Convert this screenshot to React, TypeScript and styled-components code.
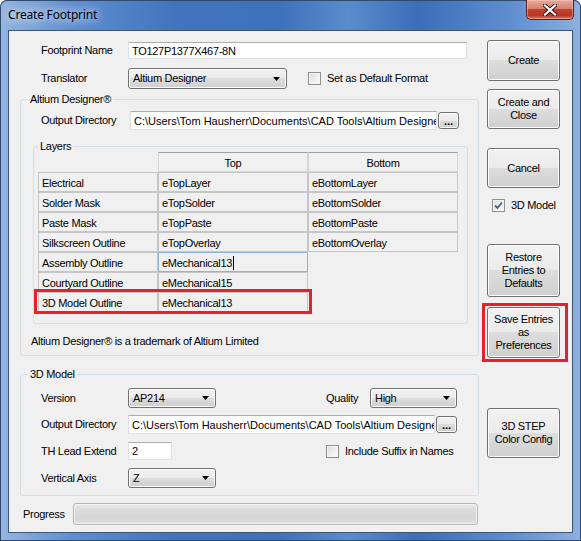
import styled, { createGlobalStyle, css } from "styled-components";

const GlobalStyle = createGlobalStyle`
  html, body { margin: 0; padding: 0; background: #ffffff; }
  body { font-family: "Liberation Sans", Arial, sans-serif; }
  * { box-sizing: border-box; }
`;

const RED = "#e3232c";

const highlight = (l: number, r: number, t: number, b: number) => css`
  position: relative;
  &::after {
    content: "";
    position: absolute;
    left: ${-l}px;
    right: ${-r}px;
    top: ${-t}px;
    bottom: ${-b}px;
    border: 3px solid ${RED};
    pointer-events: none;
  }
`;

const Window = styled.div`
  width: 581px;
  height: 541px;
  display: flex;
  flex-direction: column;
  border-radius: 7px 7px 0 0;
  background: linear-gradient(
    90deg,
    #94b5e0 0%,
    #5f8fd1 12%,
    #4274be 30%,
    #3e71bc 48%,
    #5a8bcd 60%,
    #3b6db9 72%,
    #5f8ed0 88%,
    #8db0df 100%
  );
  box-shadow: inset 0 0 0 1px #30496c;
`;

const TitleBar = styled.div`
  height: 30px;
  display: flex;
  align-items: flex-start;
  padding: 0 7px 0 8px;
`;

const Title = styled.span`
  font-family: "Noto Sans", "Open Sans", sans-serif;
  font-size: 12px;
  line-height: 30px;
  letter-spacing: -0.2px;
  color: #000;
  text-shadow: 0 0 8px rgba(255, 255, 255, 0.95), 0 0 14px rgba(255, 255, 255, 0.8);
`;

const CloseButton = styled.div`
  margin-left: auto;
  width: 48px;
  height: 20px;
  display: flex;
  align-items: center;
  justify-content: center;
  border: 1px solid #5b1f17;
  border-top: none;
  border-radius: 0 0 5px 5px;
  background: linear-gradient(#e9a99b 0%, #d7806e 45%, #c5432d 50%, #b83422 80%, #d67b5f 100%);
  box-shadow: inset 0 0 0 1px rgba(255, 210, 200, 0.45);
`;

const Client = styled.div`
  flex: 1;
  margin: 0 8px 8px;
  border: 1px solid #3d5674;
  background: #f0f0f0;
  display: flex;
  gap: 8px;
  padding: 9px 12px 0 11px;
  font-size: 11px;
  letter-spacing: -0.3px;
  color: #000;
`;

const MainColumn = styled.div`
  width: 459px;
  display: flex;
  flex-direction: column;
  padding-top: 2px;
`;

const Row = styled.div<{ $mt?: number; $pl?: number }>`
  display: flex;
  align-items: center;
  margin-top: ${(p) => p.$mt ?? 0}px;
  padding-left: ${(p) => p.$pl ?? 0}px;
`;

const Label = styled.span<{ $w: number; $ml?: number }>`
  width: ${(p) => p.$w}px;
  margin-left: ${(p) => p.$ml ?? 0}px;
  flex: none;
  white-space: nowrap;
  line-height: 13px;
`;

const TextBox = styled.div<{ $w: number; $h: number; $path?: boolean }>`
  width: ${(p) => p.$w}px;
  height: ${(p) => p.$h}px;
  flex: none;
  background: #ffffff;
  border: 1px solid #dde1e7;
  border-top-color: #abadb3;
  padding-left: 3px;
  display: flex;
  align-items: center;
  white-space: nowrap;
  overflow: hidden;
  letter-spacing: ${(p) => (p.$path ? "0px" : "-0.3px")};
`;

const winButton = css`
  border: 1px solid #707070;
  border-radius: 3px;
  background: linear-gradient(#f2f2f2 0%, #ebebeb 50%, #dddddd 50%, #cfcfcf 100%);
  box-shadow: inset 0 0 0 1px #fcfcfc;
`;

const Combo = styled.div<{ $w: number; $h: number; $ml?: number }>`
  ${winButton};
  width: ${(p) => p.$w}px;
  height: ${(p) => p.$h}px;
  margin-left: ${(p) => p.$ml ?? 0}px;
  flex: none;
  display: flex;
  align-items: center;
  padding: 0 6px 0 4px;
  white-space: nowrap;
`;

const ComboText = styled.span`
  flex: 1;
  line-height: 13px;
`;

const Browse = styled.div`
  ${winButton};
  width: 21px;
  height: 17px;
  flex: none;
  margin-left: 1px;
  display: flex;
  align-items: flex-end;
  justify-content: center;
  font-size: 11px;
  font-weight: bold;
  letter-spacing: 0;
  line-height: 12px;
  padding-bottom: 1px;
`;

const CheckWrap = styled.div<{ $ml?: number; $mt?: number }>`
  display: flex;
  align-items: center;
  gap: 6px;
  margin-left: ${(p) => p.$ml ?? 0}px;
  margin-top: ${(p) => p.$mt ?? 0}px;
  white-space: nowrap;
  line-height: 13px;
`;

const CheckBox = styled.span`
  width: 13px;
  height: 13px;
  flex: none;
  border: 1px solid #8e8f8f;
  background: linear-gradient(135deg, #dcdcdc 0%, #f0f0f0 60%, #fbfbfb 100%);
  box-shadow: inset 0 0 0 1px #f4f4f4;
  display: flex;
  align-items: center;
  justify-content: center;
`;

const Group = styled.fieldset<{ $w: number; $h: number; $mt: number; $ml?: number }>`
  margin: ${(p) => p.$mt}px 0 0 ${(p) => p.$ml ?? 0}px;
  padding: 0;
  min-width: 0;
  width: ${(p) => p.$w}px;
  height: ${(p) => p.$h}px;
  flex: none;
  border: 1px solid #d5dfe5;
  border-radius: 3px;
  display: flex;
  flex-direction: column;
`;

const Legend = styled.legend<{ $inset: number }>`
  padding: 0 2px;
  margin-left: ${(p) => p.$inset}px;
  line-height: 14px;
`;

const GroupBody = styled.div<{ $pt: number }>`
  display: flex;
  flex-direction: column;
  padding-top: ${(p) => p.$pt}px;
`;

const Grid = styled.div`
  display: flex;
  flex-direction: column;
  margin: -1px 0 0 4px;
`;

const GridRow = styled.div<{ $hl?: boolean }>`
  display: flex;
  align-self: flex-start;
  height: 20px;
  ${(p) => p.$hl && highlight(4, 4, 3, 2)};
`;

const HeadCell = styled.div<{ $w: number; $blank?: boolean }>`
  width: ${(p) => p.$w}px;
  height: 20px;
  text-align: center;
  line-height: 19px;
  padding-top: 1px;
  border: 1px solid ${(p) => (p.$blank ? "transparent" : "#d5d5d5")};
  border-top-color: ${(p) => (p.$blank ? "transparent" : "#a0a0a0")};
  background: ${(p) => (p.$blank ? "transparent" : "#f0f0f0")};
`;

const Cell = styled.div<{ $w: number; $focus?: boolean }>`
  width: ${(p) => p.$w}px;
  height: 20px;
  padding: 1px 0 0 3px;
  line-height: 18px;
  white-space: nowrap;
  border: 1px solid ${(p) => (p.$focus ? "#8fb2d6" : "#c6c6c6")};
  background: #f0f0f0;
`;

const Caret = styled.span`
  display: inline-block;
  width: 1px;
  height: 14px;
  margin-left: 1px;
  background: #000;
  vertical-align: -3px;
`;

const Note = styled.div`
  margin: 11px 0 0 10px;
  line-height: 13px;
  white-space: nowrap;
`;

const Progress = styled.div`
  width: 405px;
  height: 22px;
  flex: none;
  border: 1px solid #b6b6b6;
  border-radius: 3px;
  background: linear-gradient(#eaeaea 0%, #dcdcdc 30%, #d6d6d6 70%, #e2e2e2 100%);
  box-shadow: inset 0 0 0 1px #f3f3f3;
`;

const ButtonColumn = styled.div`
  width: 73px;
  display: flex;
  flex-direction: column;
`;

const Button = styled.div<{ $h: number; $mt: number; $hl?: boolean }>`
  ${winButton};
  height: ${(p) => p.$h}px;
  margin-top: ${(p) => p.$mt}px;
  display: flex;
  align-items: center;
  justify-content: center;
  text-align: center;
  line-height: 13px;
  ${(p) => p.$hl && highlight(6, 9, 5, 5)};
`;

const ComboArrow = () => (
  <svg width="7" height="4" viewBox="0 0 7 4">
    <path d="M0 0h7L3.5 4z" fill="#000" />
  </svg>
);

const CheckMark = () => (
  <svg width="9" height="9" viewBox="0 0 9 9">
    <path d="M1 4.5 3.5 7 8 1.5" fill="none" stroke="#4a5f8a" strokeWidth="1.8" />
  </svg>
);

const CloseGlyph = () => (
  <svg width="14" height="12" viewBox="0 0 14 12">
    <path
      d="M2 1.5 12 10.5M12 1.5 2 10.5"
      stroke="#3a1a16"
      strokeWidth="4.2"
      strokeLinecap="square"
    />
    <path d="M2 1.5 12 10.5M12 1.5 2 10.5" stroke="#ffffff" strokeWidth="2.2" strokeLinecap="square" />
  </svg>
);

const LAYERS = [
  { name: "Electrical", top: "eTopLayer", bottom: "eBottomLayer" },
  { name: "Solder Mask", top: "eTopSolder", bottom: "eBottomSolder" },
  { name: "Paste Mask", top: "eTopPaste", bottom: "eBottomPaste" },
  { name: "Silkscreen Outline", top: "eTopOverlay", bottom: "eBottomOverlay" },
  { name: "Assembly Outline", top: "eMechanical13", focus: true },
  { name: "Courtyard Outline", top: "eMechanical15" },
  { name: "3D Model Outline", top: "eMechanical13", hl: true },
];

const OUTPUT_DIR = "C:\\Users\\Tom Hausherr\\Documents\\CAD Tools\\Altium Designer";

export default function App() {
  return (
    <>
      <GlobalStyle />
      <Window>
        <TitleBar>
          <Title>Create Footprint</Title>
          <CloseButton>
            <CloseGlyph />
          </CloseButton>
        </TitleBar>
        <Client>
          <MainColumn>
            <Row $pl={21}>
              <Label $w={87}>Footprint Name</Label>
              <TextBox $w={339} $h={17}>TO127P1377X467-8N</TextBox>
            </Row>
            <Row $pl={21} $mt={9}>
              <Label $w={87}>Translator</Label>
              <Combo $w={159} $h={21}>
                <ComboText>Altium Designer</ComboText>
                <ComboArrow />
              </Combo>
              <CheckWrap $ml={21}>
                <CheckBox />
                Set as Default Format
              </CheckWrap>
            </Row>

            <Group $w={459} $h={264} $mt={3}>
              <Legend $inset={7}>Altium Designer®</Legend>
              <GroupBody $pt={5}>
                <Row $pl={20}>
                  <Label $w={89}>Output Directory</Label>
                  <TextBox $w={307} $h={19} $path>
                    {OUTPUT_DIR}
                  </TextBox>
                  <Browse>...</Browse>
                </Row>
                <Group $w={435} $h={185} $mt={9} $ml={12}>
                  <Legend $inset={4}>Layers</Legend>
                  <Grid>
                    <GridRow>
                      <HeadCell $w={120} $blank />
                      <HeadCell $w={150}>Top</HeadCell>
                      <HeadCell $w={150}>Bottom</HeadCell>
                    </GridRow>
                    {LAYERS.map((l) => (
                      <GridRow key={l.name} $hl={l.hl}>
                        <Cell $w={120}>{l.name}</Cell>
                        <Cell $w={150} $focus={l.focus}>
                          {l.top}
                          {l.focus && <Caret />}
                        </Cell>
                        {l.bottom && <Cell $w={150}>{l.bottom}</Cell>}
                      </GridRow>
                    ))}
                  </Grid>
                </Group>
                <Note>Altium Designer® is a trademark of Altium Limited</Note>
              </GroupBody>
            </Group>

            <Group $w={459} $h={129} $mt={11}>
              <Legend $inset={7}>3D Model</Legend>
              <GroupBody $pt={7}>
                <Row $pl={20}>
                  <Label $w={87}>Version</Label>
                  <Combo $w={88} $h={20}>
                    <ComboText>AP214</ComboText>
                    <ComboArrow />
                  </Combo>
                  <Label $w={31} $ml={110}>
                    Quality
                  </Label>
                  <Combo $w={87} $h={20} $ml={13}>
                    <ComboText>High</ComboText>
                    <ComboArrow />
                  </Combo>
                </Row>
                <Row $pl={20} $mt={7}>
                  <Label $w={87}>Output Directory</Label>
                  <TextBox $w={307} $h={19} $path>
                    {OUTPUT_DIR}
                  </TextBox>
                  <Browse>...</Browse>
                </Row>
                <Row $pl={20} $mt={8}>
                  <Label $w={87}>TH Lead Extend</Label>
                  <TextBox $w={44} $h={18}>2</TextBox>
                  <CheckWrap $ml={154}>
                    <CheckBox />
                    Include Suffix in Names
                  </CheckWrap>
                </Row>
                <Row $pl={20} $mt={8}>
                  <Label $w={87}>Vertical Axis</Label>
                  <Combo $w={88} $h={20}>
                    <ComboText>Z</ComboText>
                    <ComboArrow />
                  </Combo>
                </Row>
              </GroupBody>
            </Group>

            <Row $pl={3} $mt={7}>
              <Label $w={50}>Progress</Label>
              <Progress />
            </Row>
          </MainColumn>

          <ButtonColumn>
            <Button $h={41} $mt={0}>Create</Button>
            <Button $h={40} $mt={8}>
              Create and
              <br />
              Close
            </Button>
            <Button $h={40} $mt={19}>Cancel</Button>
            <CheckWrap $ml={5} $mt={11}>
              <CheckBox>
                <CheckMark />
              </CheckBox>
              3D Model
            </CheckWrap>
            <Button $h={53} $mt={32}>
              Restore
              <br />
              Entries to
              <br />
              Defaults
            </Button>
            <Button $h={51} $mt={10} $hl>
              Save Entries
              <br />
              as
              <br />
              Preferences
            </Button>
            <Button $h={50} $mt={50}>
              3D STEP
              <br />
              Color Config
            </Button>
          </ButtonColumn>
        </Client>
      </Window>
    </>
  );
}
